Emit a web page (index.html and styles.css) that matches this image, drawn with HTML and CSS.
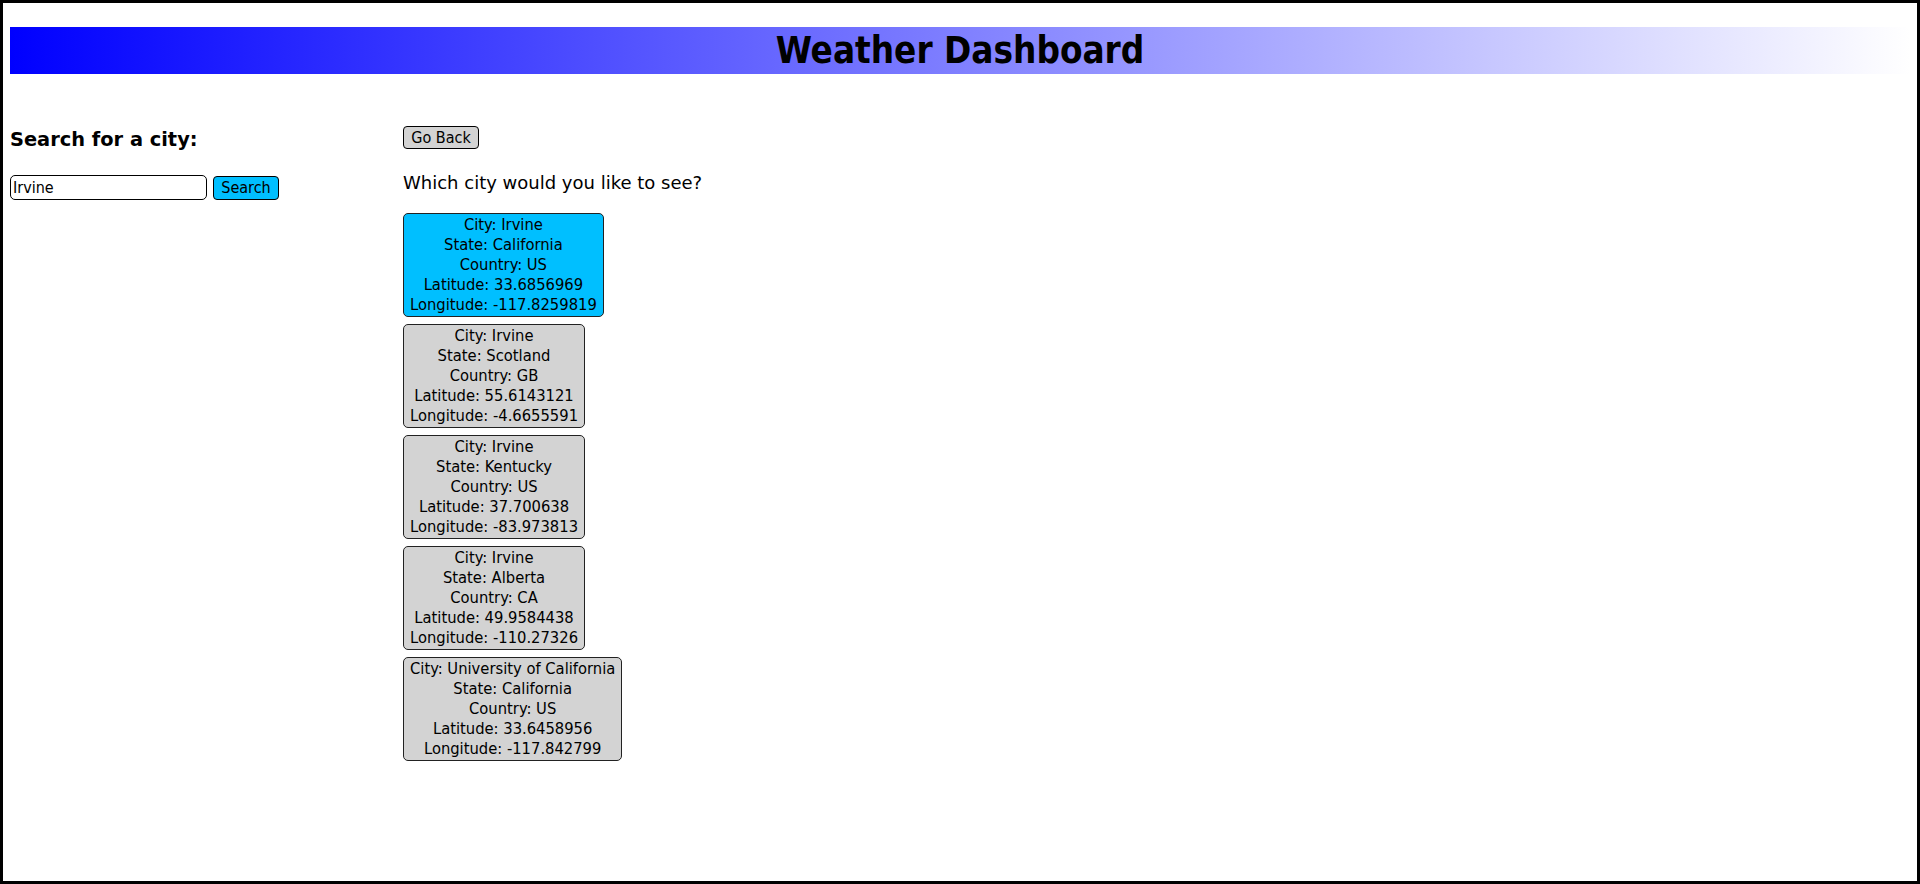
FILE: index.html
```html
<!DOCTYPE html>
<html>
<head>
<meta charset="utf-8">
<title>Weather Dashboard</title>
<link rel="stylesheet" href="styles.css">
</head>
<body>
<div class="page">
  <header class="banner"><h1 class="title">Weather Dashboard</h1></header>
  <main class="content">
    <section class="search-col">
      <h3 class="search-title">Search for a city:</h3>
      <form class="search-form">
        <input class="search-input" type="text" value="Irvine">
        <button class="btn btn-search" type="button">Search</button>
      </form>
    </section>
    <section class="result-col">
      <button class="btn btn-back" type="button">Go Back</button>
      <p class="question">Which city would you like to see?</p>
      <div class="city-list">
        <div class="city-card selected">
          <div>City: Irvine</div><div>State: California</div><div>Country: US</div><div>Latitude: 33.6856969</div><div>Longitude: -117.8259819</div>
        </div>
        <div class="city-card">
          <div>City: Irvine</div><div>State: Scotland</div><div>Country: GB</div><div>Latitude: 55.6143121</div><div>Longitude: -4.6655591</div>
        </div>
        <div class="city-card">
          <div>City: Irvine</div><div>State: Kentucky</div><div>Country: US</div><div>Latitude: 37.700638</div><div>Longitude: -83.973813</div>
        </div>
        <div class="city-card">
          <div>City: Irvine</div><div>State: Alberta</div><div>Country: CA</div><div>Latitude: 49.9584438</div><div>Longitude: -110.27326</div>
        </div>
        <div class="city-card">
          <div>City: University of California</div><div>State: California</div><div>Country: US</div><div>Latitude: 33.6458956</div><div>Longitude: -117.842799</div>
        </div>
      </div>
    </section>
  </main>
</div>
</body>
</html>
```

FILE: styles.css
```css
html, body {
  margin: 0;
  padding: 0;
}
body {
  font-family: "DejaVu Sans Condensed", "DejaVu Sans", sans-serif;
  color: #000;
  background: #fff;
}
.page {
  box-sizing: border-box;
  height: 884px;
  border: 3px solid #000;
  padding: 24px 7px 0 7px;
  overflow: hidden;
}
.banner {
  height: 47px;
  background: linear-gradient(to right, #0000ff, #ffffff);
}
.title {
  margin: 0;
  text-align: center;
  font-size: 36.5px;
  line-height: 47px;
  font-weight: bold;
}
.content {
  display: flex;
  align-items: flex-start;
}
.search-col {
  width: 393px;
  flex: none;
}
.search-title {
  margin: 54px 0 0 0;
  font-family: "DejaVu Sans", sans-serif;
  font-size: 19.4px;
  line-height: 23px;
  font-weight: bold;
}
.search-form {
  display: flex;
  align-items: center;
  gap: 6px;
  margin-top: 24px;
}
.search-input {
  box-sizing: border-box;
  width: 197px;
  height: 25px;
  margin: 0;
  padding: 1px 2px;
  border: 1px solid #000;
  border-radius: 5px;
  font-family: inherit;
  font-size: 16px;
  color: #000;
}
.btn {
  box-sizing: border-box;
  margin: 0;
  font-family: inherit;
  font-size: 16px;
  line-height: 19px;
  color: #000;
  border: 1px solid #000;
  border-radius: 4px;
  padding: 1px 6px;
  height: 23px;
}
.btn-search {
  background: #00bfff;
  height: 24px;
  width: 66px;
  padding: 0;
}
.btn-back {
  background: #d3d3d3;
  width: 76px;
  padding: 0;
}
.result-col {
  padding-top: 52px;
}
.question {
  margin: 23px 0 19px 0;
  font-family: "DejaVu Sans", sans-serif;
  font-size: 18px;
  line-height: 22px;
}
.city-list {
  display: flex;
  flex-direction: column;
  align-items: flex-start;
  gap: 7px;
}
.city-card {
  border: 1px solid #222;
  border-radius: 5px;
  padding: 1px 6px;
  background: #d3d3d3;
  text-align: center;
  font-size: 16.4px;
  line-height: 20px;
}
.city-card.selected {
  background: #00bfff;
}
```
